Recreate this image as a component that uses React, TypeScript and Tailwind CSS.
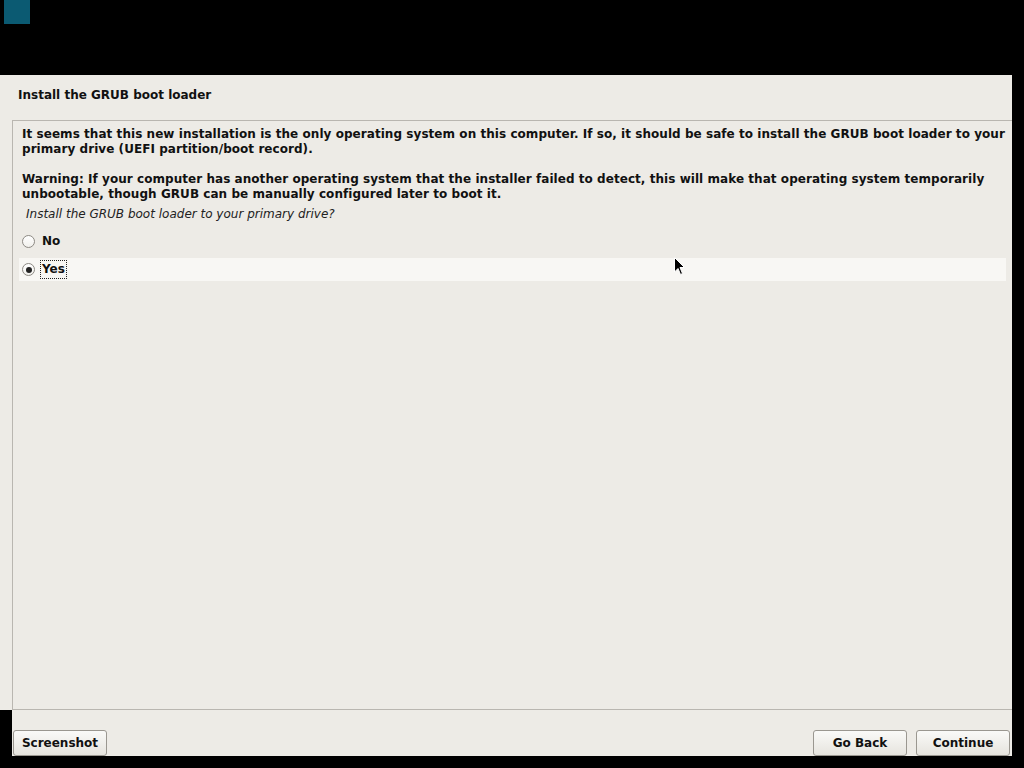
import React from "react";

const font = { fontFamily: '"DejaVu Sans", "Liberation Sans", sans-serif' };

function Radio({ checked }: { checked?: boolean }) {
  return (
    <span className="flex h-[13px] w-[13px] items-center justify-center rounded-full border border-[#8d8a84] bg-gradient-to-b from-white to-[#f1f0ec]">
      {checked && <span className="h-[6px] w-[6px] rounded-full bg-[#222]" />}
    </span>
  );
}

function Btn({ label, className }: { label: string; className?: string }) {
  return (
    <button
      className={`h-[26px] w-[94px] rounded-[3px] border border-[#9a9790] bg-gradient-to-b from-[#fafaf8] to-[#e6e4de] text-[12px] font-bold text-[#111] ${className ?? ""}`}
    >
      {label}
    </button>
  );
}

export default function App() {
  return (
    <div className="relative flex h-[768px] w-[1024px] flex-col bg-black" style={font}>
      <div className="h-[75px]">
        <div className="ml-[4px] h-[24px] w-[26px] bg-[#0b5a72]" />
      </div>
      <div className="flex h-[635px] w-[1012px] flex-col bg-[#edebe6]">
        <h1 className="pl-[18px] pt-[13px] text-[12px] font-bold leading-[15px] text-[#111]">
          Install the GRUB boot loader
        </h1>
        <div className="ml-[12px] mt-[17px] flex-1 border-l border-t border-b border-[#b9b6b0] pr-[6px] pt-[6px] text-[12px] leading-[15px] text-[#111]">
          <p className="pl-[9px] font-bold tracking-[0.05px]">
            It seems that this new installation is the only operating system on this computer. If so, it should be safe
            to install the GRUB boot loader to your primary drive (UEFI partition/boot record).
          </p>
          <p className="mt-[15px] pl-[9px] font-bold tracking-[0.05px]">
            Warning: If your computer has another operating system that the installer failed to detect, this will make
            that operating system temporarily unbootable, though GRUB can be manually configured later to boot it.
          </p>
          <p className="mt-[5px] pl-[13px] italic text-[#222]">Install the GRUB boot loader to your primary drive?</p>
          <div className="mt-[8px] flex flex-col gap-[5px] pl-[6px]">
            <div className="flex h-[23px] items-center gap-[7px] pl-[3px] font-bold">
              <Radio />
              <span>No</span>
            </div>
            <div className="flex h-[23px] items-center gap-[5px] bg-[#f8f7f4] pl-[3px] font-bold">
              <Radio checked />
              <span className="border border-dotted border-[#222] px-[1px] leading-[17px]">Yes</span>
            </div>
          </div>
        </div>
      </div>
      <div className="ml-[12px] flex h-[46px] w-[1000px] items-start bg-[#edebe6] pt-[20px]">
        <Btn label="Screenshot" className="ml-[1px]" />
        <div className="flex-1" />
        <Btn label="Go Back" />
        <Btn label="Continue" className="ml-[9px] mr-[2px]" />
      </div>
      <svg className="absolute left-[674px] top-[257px]" width="12" height="19" viewBox="0 0 12 19">
        <path d="M0.5 0.5 L0.5 15 L4 11.5 L6.5 17.5 L8.5 16.5 L6 10.5 L10.5 10.5 Z" fill="#000" stroke="#fff" strokeWidth="1" />
      </svg>
    </div>
  );
}
